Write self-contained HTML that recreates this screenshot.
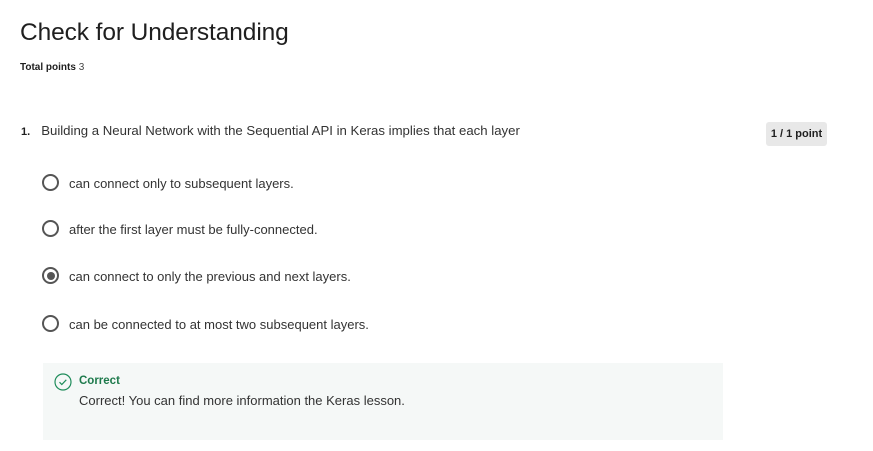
<!DOCTYPE html>
<html><head><style>
body{margin:0;width:873px;height:451px;background:#fff;font-family:"Liberation Sans",sans-serif;color:#1f1f1f;position:relative;overflow:hidden}
.a{position:absolute;white-space:nowrap}
.t{left:20px;top:19px;font-size:24.5px;color:#1f1f1f;letter-spacing:-0.1px}
.tp{left:20px;top:62px;font-size:10px;font-weight:bold}
.tp span{font-weight:normal;color:#444}
.q{left:21px;top:123px;font-size:13.2px;color:#333}
.q b{font-size:11px;color:#1f1f1f;margin-right:11px}
.opt{left:42px;font-size:13px;color:#333}
.r{position:absolute;left:0;top:-2px;width:17px;height:17px;border:2px solid #555;border-radius:50%;box-sizing:border-box}
.r.s::after{content:"";position:absolute;left:2.5px;top:2.5px;width:8px;height:8px;border-radius:50%;background:#555}
.opt span{margin-left:27px}
.pt{left:766px;top:122px;width:61px;height:24px;background:#e8e8e8;border-radius:3px;font-size:11px;font-weight:bold;text-align:center;line-height:24px}
.fb{left:43px;top:363px;width:680px;height:77px;background:#f5f8f7}
</style></head><body>
<div class="a t">Check for Understanding</div>
<div class="a tp">Total points <span>3</span></div>
<div class="a q"><b>1.</b>Building a Neural Network with the Sequential API in Keras implies that each layer</div>
<div class="a pt">1 / 1 point</div>
<div class="a opt" style="top:176px"><div class="r"></div><span>can connect only to subsequent layers.</span></div>
<div class="a opt" style="top:222px"><div class="r"></div><span>after the first layer must be fully-connected.</span></div>
<div class="a opt" style="top:269px"><div class="r s"></div><span>can connect to only the previous and next layers.</span></div>
<div class="a opt" style="top:317px"><div class="r"></div><span>can be connected to at most two subsequent layers.</span></div>
<div class="a fb"></div>
<svg class="a" style="left:54px;top:373px" width="18" height="18" viewBox="0 0 18 18"><circle cx="9" cy="9" r="8" fill="none" stroke="#1e8c5a" stroke-width="1.2"/><path d="M5.5 9.2l2.3 2.3 4.5-4.7" fill="none" stroke="#1e8c5a" stroke-width="1.2"/></svg>
<div class="a" style="left:79px;top:375px;font-size:11.5px;font-weight:bold;color:#1e7a4c">Correct</div>
<div class="a" style="left:79px;top:393px;font-size:13px;color:#333">Correct! You can find more information the Keras lesson.</div>
</body></html>
